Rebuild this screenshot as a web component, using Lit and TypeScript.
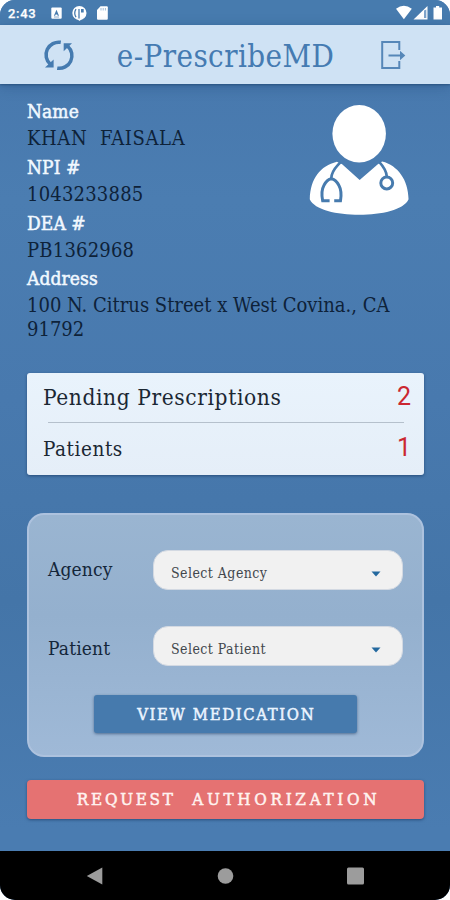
import { LitElement, html, css } from "lit";
import { customElement, property } from "lit/decorators.js";

@customElement("status-bar")
class StatusBar extends LitElement {
  static styles = css`
    :host { display: flex; height: 25px; box-sizing: border-box; padding-left: 8px; background: #477bae; color: #fff; }
    .time { width: 43px; font: 500 13px/27px Roboto, sans-serif; letter-spacing: 0.7px; -webkit-text-stroke: 0.25px #fff; }
    .left { width: 58px; height: 25px; }
    .right { width: 50px; height: 25px; margin-left: auto; margin-right: 5px; }
  `;
  render() {
    return html`
      <div class="time">2:43</div>
      <svg class="left" viewBox="51 0 58 25" fill="#fff">
        <rect x="51.3" y="7.6" width="10.4" height="11.2" rx="1" />
        <path d="M56.5 9.8l2.5 6h-1.3l-.5-1.3h-1.6l-.5 1.3h-1.2z" fill="#477bae" />
        <path d="M54 17h5" stroke="#477bae" stroke-width=".6" />
        <path d="M76 18l3.500 3 3.500-3z" />
        <circle cx="79.400" cy="13" r="7.100" />
        <path d="M76 9.200c-1.600 2.500-1.600 5.500 0 8M79 9v9.500" fill="none" stroke="#477bae" stroke-width="1.300" />
        <path d="M81 9h2.700v3.500H81z" fill="#477bae" />
        <path d="M100.500 6.300h6.300q1 0 1 1v11.500q0 1-1 1h-8.800q-1 0-1-1V10z" />
        <path d="M101 8v2.500M103.200 8v2.500M105.400 8v2.500" stroke="#9fbcd8" stroke-width="1" />
      </svg>
      <svg class="right" viewBox="395 0 50 25" fill="#fff">
        <path d="M396 8.800Q403.800 2.500 411.800 8.800L403.900 19.200z" />
        <path d="M427.500 6v13.500H413.500z" />
        <path d="M424 10.500v7.500h2.300v-8.500z" fill="#7ea3ca" />
        <path d="M436 6h3.200v1.500h2.800v12H433.500v-12H436z" />
      </svg>
    `;
  }
}

@customElement("title-bar")
class TitleBar extends LitElement {
  static styles = css`
    :host { display: flex; align-items: center; height: 59px; box-sizing: border-box; padding: 0 44px 0 43px;
      background: #cfe2f4; box-shadow: 0 1px 2px rgba(24, 60, 100, 0.55), 0 3px 12px rgba(28, 64, 108, 0.3); position: relative; }
    .title { flex: 1; text-align: center; padding: 3px 4px 0 0; color: #457bb2; white-space: nowrap;
      font: 31px/59px "DejaVu Serif Condensed", "DejaVu Serif", serif; font-stretch: semi-condensed; letter-spacing: 0.42px; }
    .sync { width: 32px; height: 32px; flex: none; }
    .exit { width: 26px; height: 30px; flex: none; }
  `;
  render() {
    return html`
      <svg class="sync" viewBox="0 0 32 32" fill="none" stroke="#457bb0" stroke-width="3.500">
        <path d="M17.800 3.300A12.700 12.700 0 0 0 7.300 25.300" />
        <path d="M14.200 29.200A12.700 12.700 0 0 0 24.700 7.200" />
        <path d="M2 28.500h8.600v-8z" fill="#457bb0" stroke="none" />
        <path d="M29 4.300h-8.300v8z" fill="#457bb0" stroke="none" />
      </svg>
      <div class="title">e-PrescribeMD</div>
      <svg class="exit" viewBox="0 0 26 30" fill="none" stroke="#5687b8" stroke-width="2">
        <path d="M19.300 10V2H2.200v26h17.100v-7M8.500 15.500H22" />
        <path d="M20 10.800l5.300 4.700L20 20.200z" fill="#5687b8" stroke="none" />
      </svg>
    `;
  }
}

@customElement("doctor-profile")
class DoctorProfile extends LitElement {
  static styles = css`
    :host { display: block; height: 289px; box-sizing: border-box; padding: 15px 27px 0; position: relative;
      font-family: "DejaVu Serif Condensed", "DejaVu Serif", serif; font-stretch: semi-condensed; }
    .label { font-size: 19px; line-height: 24px; color: #f1f8ff; -webkit-text-stroke: 0.5px #f1f8ff; margin-bottom: 3px; letter-spacing: 0.1px; }
    .value { font-size: 20px; line-height: 24px; color: #0e2239; margin-bottom: 4.800px; white-space: pre; letter-spacing: 0.2px; }
    .name { letter-spacing: 0.6px; }
    .address { letter-spacing: 0; }
    .avatar { position: absolute; left: 308px; top: 19.500px; width: 102px; height: 112px; }
  `;
  fields = [
    ["Name", "KHAN  FAISALA", "name"],
    ["NPI #", "1043233885", "npi"],
    ["DEA #", "PB1362968", "dea"],
    ["Address", "100 N. Citrus Street x West Covina., CA\n91792", "address"],
  ];
  render() {
    return html`
      ${this.fields.map(([label, value, kind]) => html`<div class="label">${label}</div><div class="value ${kind}">${value}</div>`)}
      <svg class="avatar" viewBox="54 40 306 339" fill="#fff">
        <ellipse cx="207.500" cy="130" rx="81" ry="87" />
        <path d="M140 215C90 228 60 265 58 328C72 360 140 375 208 375C275 375 343 360 357 328C356 270 325 226 277 214L264 222L209 270L156 222Z" />
        <g fill="none" stroke="#477bae" stroke-width="9">
          <path d="M151 216C140 230 124 240 123 265" stroke-width="8" />
          <path d="M118 333H97Q91 304 101 286Q110 268 123 266Q137 268 146 286Q156 304 151 333H132" />
          <path d="M268 215C280 228 290 240 291 259" stroke-width="8" />
          <circle cx="291" cy="279" r="18" />
        </g>
      </svg>
    `;
  }
}

@customElement("summary-card")
class SummaryCard extends LitElement {
  static styles = css`
    :host { display: block; height: 102px; margin: 0 26px 0 27px; box-sizing: border-box; border-radius: 3px;
      background: linear-gradient(#e9f3fc, #e5eef8); box-shadow: 0 1px 3px rgba(20, 50, 90, 0.6);
      font-family: "DejaVu Serif Condensed", "DejaVu Serif", serif; font-stretch: semi-condensed; color: #1b2733; }
    .row { display: flex; justify-content: space-between; padding: 0 13px 0 16px; height: 49px; line-height: 49px; }
    .pending { font-size: 22.500px; letter-spacing: 0.6px; }
    .patients { font-size: 20.500px; height: 51px; line-height: 52px; letter-spacing: 0.55px; }
    .rule { height: 1px; margin: 0 20px 0 21px; background: #b5c0cc; }
    .count { font: 25px/48px Roboto, sans-serif; color: #cb2730; letter-spacing: 0; }
    .patients .count { line-height: 49px; }
  `;
  render() {
    return html`
      <div class="row pending"><span>Pending Prescriptions</span><span class="count">2</span></div>
      <div class="rule"></div>
      <div class="row patients"><span>Patients</span><span class="count">1</span></div>
    `;
  }
}

@customElement("select-field")
class SelectField extends LitElement {
  @property() label = "";
  @property() placeholder = "";
  static styles = css`
    :host { display: flex; align-items: center; height: 41px;
      font-family: "DejaVu Serif Condensed", "DejaVu Serif", serif; font-stretch: semi-condensed; }
    .label { width: 105px; font-size: 19px; color: #14263a; line-height: 38px; padding: var(--label-padding, 0 0 3px); letter-spacing: 0.15px; }
    .box { display: flex; align-items: center; justify-content: space-between; width: 250px; height: 40px; box-sizing: border-box;
      padding: 6px 21px 0 17px; border-radius: 15px; border: 1px solid #d3d9e2; background: #f1f1f1; font-size: 14px; color: #42474d;
      line-height: 20px; letter-spacing: 0.45px; }
    .arrow { width: 10px; height: 6px; margin-top: 1px; }
  `;
  render() {
    return html`
      <div class="label">${this.label}</div>
      <div class="box">
        <span>${this.placeholder}</span>
        <svg class="arrow" viewBox="0 0 10 6"><path d="M.5.500h9L5 5.500z" fill="#24699f" /></svg>
      </div>
    `;
  }
}

@customElement("medication-form")
class MedicationForm extends LitElement {
  static styles = css`
    :host { display: block; height: 244px; margin: 37.500px 26px 0 27px; padding: 35px 19px 0; box-sizing: border-box;
      border: 2px solid #adc2de; border-radius: 17px; background: linear-gradient(#9ab5d1, #94b0ce 42%, #9fb9d7); }
    .second { margin-top: 35px; --label-padding: 4px 0 0; }
    .view { width: 263px; height: 38px; margin: 28px auto 0 46px; border-radius: 3px; background: #467aad; color: #eaf4ff; text-align: center;
      box-shadow: 0 1px 3px rgba(30, 60, 100, 0.6); font: 16.500px/40px "DejaVu Serif Condensed", "DejaVu Serif", serif;
      font-stretch: semi-condensed; letter-spacing: 1.650px; text-indent: 1.500px; -webkit-text-stroke: 0.5px #eaf4ff; }
  `;
  render() {
    return html`
      <select-field label="Agency" placeholder="Select Agency"></select-field>
      <select-field class="second" label="Patient" placeholder="Select Patient"></select-field>
      <div class="view">VIEW MEDICATION</div>
    `;
  }
}

@customElement("nav-bar")
class NavBar extends LitElement {
  static styles = css`
    :host { display: flex; align-items: center; justify-content: space-between; height: 49px; padding: 0 86px; background: #000; }
    .key { width: 17px; height: 18px; }
  `;
  render() {
    return html`
      <svg class="key" viewBox="0 0 17 18" fill="#9c9c9c"><path d="M.8 9L16.300.500v17z" /></svg>
      <svg class="key" viewBox="0 0 17 18" fill="#9c9c9c"><circle cx="8.500" cy="9" r="7.800" /></svg>
      <svg class="key" viewBox="0 0 17 18" fill="#9c9c9c"><rect y=".5" width="17" height="17" rx="1.500" /></svg>
    `;
  }
}

@customElement("app-root")
class AppRoot extends LitElement {
  static styles = css`
    :host { display: block; width: 450px; height: 900px; background: #fff; }
    .phone { display: flex; flex-direction: column; height: 900px; border-radius: 15px; overflow: hidden;
      background: linear-gradient(#4879ae 84px, #4b7db1 200px, #4879ae 400px, #4475a8 600px, #4a7cb1 830px); }
    .request { height: 39px; margin: 23.500px 26px 0 27px; border-radius: 4px; background: #e57272; color: #fff3f0; text-align: center;
      box-shadow: 0 1px 3px rgba(20, 50, 90, 0.6); font: 17px/39px "DejaVu Serif Condensed", "DejaVu Serif", serif;
      font-stretch: semi-condensed; letter-spacing: 2.700px; word-spacing: 9px; text-indent: 6px; -webkit-text-stroke: 0.5px #fff3f0; white-space: nowrap; }
    .wide { letter-spacing: 3.650px; }
    .nav { margin-top: auto; }
  `;
  render() {
    return html`
      <div class="phone">
        <status-bar></status-bar>
        <title-bar></title-bar>
        <doctor-profile></doctor-profile>
        <summary-card></summary-card>
        <medication-form></medication-form>
        <div class="request">REQUEST <span class="wide">AUTHORIZATION</span></div>
        <nav-bar class="nav"></nav-bar>
      </div>
    `;
  }
}
